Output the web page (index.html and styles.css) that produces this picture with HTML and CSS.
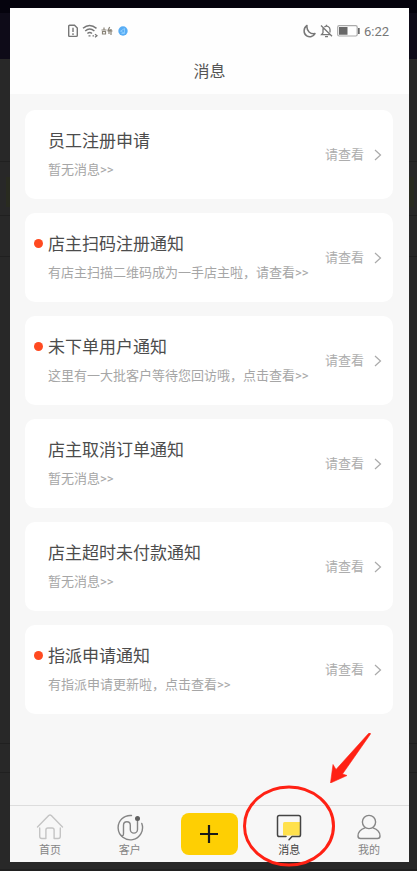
FILE: index.html
```html
<!DOCTYPE html>
<html lang="zh-CN">
<head>
<meta charset="utf-8">
<meta name="viewport" content="width=device-width, initial-scale=1">
<title>消息</title>
<link rel="stylesheet" href="styles.css">
</head>
<body>
<div class="phone">
  <header class="header">
    <div class="status">
      <div class="status-group">
        <svg width="12" height="14" viewBox="0 0 12 14" fill="none" stroke="#777" stroke-width="1.4"><path d="M2.700 1.200H7.500L10.300 4v7.400q0 1-1 1H2.700q-1 0-1-1V2.200q0-1 1-1z"/><path d="M6 3.700v4.300M6 9.300V11"/></svg>
        <svg width="16" height="14" viewBox="0 0 16 14" fill="none" stroke="#777" stroke-width="1.5"><path d="M1 4.300Q7.500-1.300 14.500 4.300M3.200 7Q7.700 3 12.400 7M5.400 9.500Q7.700 7.600 10 9.500"/><path d="M6.500 11.800h2M10.500 11.800h1.500M13 10.300l2 1.500-2 1.500" stroke-width="1.300"/></svg>
        <svg class="brush" width="12" height="10" viewBox="0 0 12 10" fill="none" stroke="#8a8478" stroke-width="1.2"><path d="M.5 4h5M3 1.500v3M1.500 5.500h3v2.500h-3zM6.500 5h5M8.700 1l-1.500 3h3.500M8 5v3M10 3v6"/></svg>
        <svg width="10" height="10" viewBox="0 0 10 10"><circle cx="5" cy="5" r="4.700" fill="#58adf5"/><path d="M2.500 5.200l4-2.700v4.700zM3.500 7.500h3" fill="none" stroke="#8accff"/></svg>
      </div>
      <div class="status-group status-right">
        <svg width="13" height="14" viewBox="0 0 13 14" fill="none" stroke="#777" stroke-width="1.500" stroke-linejoin="round"><path d="M4 1.500C.2 4 .2 9.500 3.700 11.800c3 1.900 6.600.8 8.300-2.200C7.500 10.500 3.300 7 4 1.500z"/></svg>
        <svg width="13" height="14" viewBox="0 0 13 14" fill="none" stroke="#777" stroke-width="1.300"><path d="M3 4.200v4.600L1.500 10.700H10M4.400 2.900C6.700 1.200 10 2.600 10 5.500v3M6.500.7v1.500M5 12.700h3M1 1.500l11 10.700"/></svg>
        <svg width="23" height="12" viewBox="0 0 23 12"><rect x=".7" y=".7" width="19.500" height="10.300" rx="1.500" fill="#fff" stroke="#aaa" stroke-width="1.200"/><path d="M2 2h8.500v7.800H2zM21 3h1.700v6H21z" fill="#686868"/></svg>
        <span>6:22</span>
      </div>
    </div>
    <h1>消息</h1>
  </header>

  <main class="list">
    <a class="card" href="#"><span class="copy"><strong>员工注册申请</strong><span class="note">暂无消息&gt;&gt;</span></span><span class="more">请查看</span><svg class="chevron" viewBox="0 0 8 12"><path d="M1 1l5.500 5L1 11"/></svg></a>
    <a class="card unread" href="#"><span class="copy"><strong>店主扫码注册通知</strong><span class="note">有店主扫描二维码成为一手店主啦，请查看&gt;&gt;</span></span><span class="more">请查看</span><svg class="chevron" viewBox="0 0 8 12"><path d="M1 1l5.500 5L1 11"/></svg></a>
    <a class="card unread" href="#"><span class="copy"><strong>未下单用户通知</strong><span class="note">这里有一大批客户等待您回访哦，点击查看&gt;&gt;</span></span><span class="more">请查看</span><svg class="chevron" viewBox="0 0 8 12"><path d="M1 1l5.500 5L1 11"/></svg></a>
    <a class="card" href="#"><span class="copy"><strong>店主取消订单通知</strong><span class="note">暂无消息&gt;&gt;</span></span><span class="more">请查看</span><svg class="chevron" viewBox="0 0 8 12"><path d="M1 1l5.500 5L1 11"/></svg></a>
    <a class="card" href="#"><span class="copy"><strong>店主超时未付款通知</strong><span class="note">暂无消息&gt;&gt;</span></span><span class="more">请查看</span><svg class="chevron" viewBox="0 0 8 12"><path d="M1 1l5.500 5L1 11"/></svg></a>
    <a class="card unread" href="#"><span class="copy"><strong>指派申请通知</strong><span class="note">有指派申请更新啦，点击查看&gt;&gt;</span></span><span class="more">请查看</span><svg class="chevron" viewBox="0 0 8 12"><path d="M1 1l5.500 5L1 11"/></svg></a>
  </main>

  <nav class="tabs">
    <a class="tab" href="#">
      <svg width="28" height="28" viewBox="0 0 28 28" fill="none" stroke="#c4c4c4" stroke-width="1.400" stroke-linecap="round" stroke-linejoin="round"><path d="M1.500 14L12.700 2.600q1.300-1.200 2.600 0L26.500 14M3.700 15v8.300q0 2.200 2.200 2.200h4V17q0-2 2-2h4.200q2 0 2 2v8.500h4q2.200 0 2.200-2.200V15"/></svg>
      <span>首页</span>
    </a>
    <a class="tab" href="#">
      <svg width="28" height="28" viewBox="0 0 28 28" fill="none" stroke="#858585" stroke-width="1.400" stroke-linecap="round"><path d="M15.500 2.500A12.200 12.200 0 1 0 25.800 10.500"/><path d="M5.500 22.500Q7.500 23.500 7.500 20.500V12.200a3.400 3.400 0 0 1 6.800 0v4.300a3.600 3.600 0 0 0 7.200 0V6"/><circle cx="21.500" cy="5.500" r="2.500" fill="#606060" stroke="none"/></svg>
      <span>客户</span>
    </a>
    <div class="tab"><button class="add" aria-label="添加"><svg width="20" height="20" viewBox="0 0 20 20"><path d="M10 1v18M1 10h18" stroke="#191919" stroke-width="2.200"/></svg></button></div>
    <a class="tab current" href="#" aria-current="page">
      <svg width="28" height="28" viewBox="0 0 28 28" fill="none" stroke="#444" stroke-width="1.500" stroke-linecap="round" stroke-linejoin="round"><path d="M9.500 9H25v13.500H8V10.500q0-1.500 1.500-1.500z" fill="#ffe14d" stroke="none"/><path d="M11 23.500H4.300q-1.800 0-1.800-1.800V4.300q0-1.800 1.800-1.800h19.400q1.800 0 1.800 1.800v17.400q0 1.800-1.800 1.800H17l-3 3.200"/></svg>
      <span>消息</span>
      <svg class="ring" viewBox="0 0 92 82"><ellipse cx="46" cy="41" rx="44.500" ry="39" fill="none" stroke="#ff2114" stroke-width="3"/></svg>
      <svg class="arrow" viewBox="0 0 41 50"><path d="M38.500.5Q40.500-.8 40.500 1L12.500 41l4.500 1.500L.5 50 3 31.500l3 5z" fill="#ff2114" stroke="#ff2114" stroke-width=".6"/></svg>
    </a>
    <a class="tab" href="#">
      <svg width="28" height="28" viewBox="0 0 28 28" fill="none" stroke="#868686" stroke-width="1.400" stroke-linecap="round" stroke-linejoin="round"><circle cx="14" cy="9" r="6.600"/><path d="M10 14.800Q3 17 3 23q0 2.500 2.500 2.500h17Q25 25.500 25 23q0-6-7-8.200"/></svg>
      <span>我的</span>
    </a>
  </nav>
</div>
</body>
</html>
```
FILE: styles.css
```css
* { box-sizing: border-box; }

body {
  margin: 0;
  min-height: 100vh;
  padding: 8px 8px 9px 10px;
  display: flex;
  font-family: Roboto, "Noto Sans CJK SC", sans-serif;
  background:
    linear-gradient(#292b20, #292b20) 6px 177px / calc(100% - 9px) 30px no-repeat,
    linear-gradient(#202020, #202020) 0 161px / 100% 1px no-repeat,
    linear-gradient(#202020, #202020) 0 215px / 100% 1px no-repeat,
    linear-gradient(#202020, #202020) 0 256px / 100% 1px no-repeat,
    linear-gradient(#202020, #202020) 0 743px / 100% 1px no-repeat,
    linear-gradient(#202020, #202020) 0 772px / 100% 1px no-repeat,
    linear-gradient(#202020, #202020) 0 869px / 100% 2px no-repeat,
    linear-gradient(#05030d 0 13px, #0e0b18 13px 59px, #282828 59px);
}

a { color: inherit; text-decoration: none; }
svg { display: block; flex: none; }

.phone {
  flex: 1;
  min-width: 0;
  display: flex;
  flex-direction: column;
  background: #f7f7f7;
}

.header { background: #fefefe; }

.status {
  display: flex;
  justify-content: space-between;
  align-items: center;
  height: 46px;
  padding: 0 20px 0 57px;
  color: #777;
  font-size: 13px;
}

.status-group { display: flex; align-items: center; gap: 3px; }
.status-right { gap: 4px; }
.brush { margin-right: 2px; }

h1 {
  margin: 0;
  height: 40px;
  line-height: 36px;
  text-align: center;
  font-size: 16px;
  font-weight: 400;
  color: #555;
}

.list {
  flex: 1;
  display: flex;
  flex-direction: column;
  gap: 14px;
  padding: 16px 16px 14px 15px;
}

.card {
  position: relative;
  display: flex;
  align-items: center;
  height: 89px;
  padding: 0 11px 0 23px;
  border-radius: 10px;
  background: #fff;
  white-space: nowrap;
}

.unread::before {
  content: "";
  position: absolute;
  left: 9px;
  top: 26px;
  width: 9px;
  height: 9px;
  border-radius: 50%;
  background: #ff4a20;
}

.copy { flex: 1; min-width: 0; display: flex; flex-direction: column; gap: 7px; padding-top: 2px; }
strong { font-size: 17px; line-height: 22px; font-weight: 400; color: #4c4c4c; }
.note { font-size: 13px; line-height: 22px; color: #a6a6a6; }
.more { font-size: 13px; line-height: 20px; color: #adadad; }

.chevron {
  width: 8px;
  height: 12px;
  margin-left: 10px;
  fill: none;
  stroke: #aaa;
  stroke-width: 1.2;
}

.tabs {
  display: grid;
  grid-template-columns: repeat(5, 1fr);
  height: 57px;
  border-top: 1px solid #ddd;
}

.tab {
  position: relative;
  display: flex;
  flex-direction: column;
  align-items: center;
  padding-top: 7px;
  font-size: 11px;
  line-height: 16px;
  color: #858585;
}

.tab > span { margin-top: 2px; }
.current { color: #444; }

.add {
  display: grid;
  place-items: center;
  width: 57px;
  height: 42px;
  padding: 0;
  border: 0;
  border-radius: 8px;
  background: #fecf03;
}

.ring {
  position: absolute;
  left: 50%;
  top: -21px;
  width: 92px;
  height: 82px;
  margin-left: -46px;
}

.arrow {
  position: absolute;
  left: 50%;
  top: -73px;
  width: 41px;
  height: 50px;
  margin-left: 41px;
}
```
